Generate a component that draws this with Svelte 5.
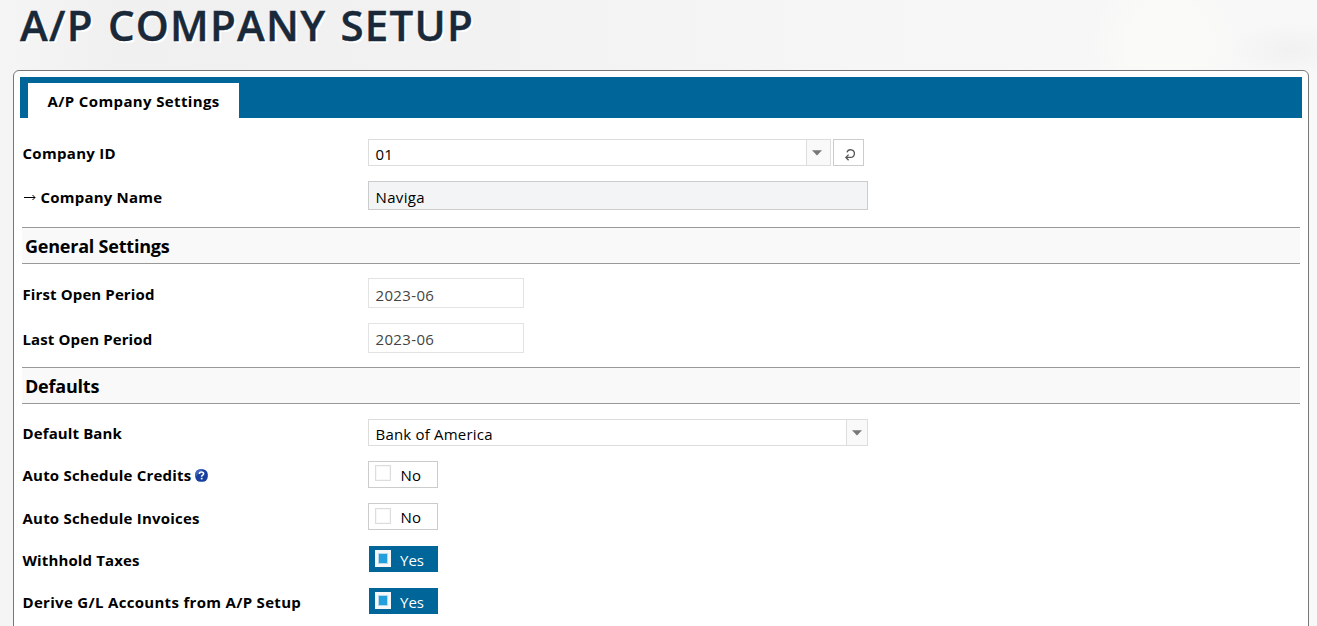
<script>
  const period = '2023-06';
</script>

{#snippet caret()}
  <span class="caret">
    <svg width="10" height="6" viewBox="0 0 10 6"><path d="M0 0.3H10L5 5.6Z" fill="#777" /></svg>
  </span>
{/snippet}

{#snippet toggle(on)}
  <button class="toggle" class:on>
    <span class="box"></span><span class="state">{on ? 'Yes' : 'No'}</span>
  </button>
{/snippet}

<div class="page">
  <h1><span>A/P COMPANY SETUP</span></h1>
  <main class="panel">
    <nav><div class="tab"><span>A/P Company Settings</span></div></nav>
    <div class="form">
      <div class="row first">
        <div class="label"><span>Company ID</span></div>
        <div class="select id"><span class="value">01</span>{@render caret()}</div>
        <button class="refresh" aria-label="Refresh">
          <svg width="12" height="13" viewBox="0 0 12 13" fill="none" stroke="#555" stroke-width="1.3">
            <path d="M3 4.4A3.8 3.8 0 1 1 6.6 9.4H2" /><path d="M4.6 6.6L1.9 9.4L4.6 12.2" />
          </svg>
        </button>
      </div>
      <div class="row name">
        <div class="label">
          <svg class="arrow" width="18" height="9" viewBox="0 0 18 9" fill="none" stroke="#000"><path d="M1 4.5H12M9.5 2L12 4.5L9.5 7" /></svg>
          <span>Company Name</span>
        </div>
        <div class="field readonly"><span class="value">Naviga</span></div>
      </div>
      <h2><span>General Settings</span></h2>
      <div class="row period">
        <div class="label"><span>First Open Period</span></div>
        <div class="field short"><span class="value">{period}</span></div>
      </div>
      <div class="row period last">
        <div class="label"><span>Last Open Period</span></div>
        <div class="field short"><span class="value">{period}</span></div>
      </div>
      <h2><span>Defaults</span></h2>
      <div class="row bank">
        <div class="label"><span>Default Bank</span></div>
        <div class="select wide"><span class="value">Bank of America</span>{@render caret()}</div>
      </div>
      <div class="row">
        <div class="label">
          <span>Auto Schedule Credits</span>
          <svg class="help" width="13" height="13" viewBox="0 0 13 13">
            <rect x="0.2" y="0.2" width="12.6" height="12.6" rx="5.2" fill="#173f9d" />
            <path d="M0.4 8.5V5Q.8 .6 5 .3H8.6Q4 3 .4 8.5Z" fill="#4065b8" />
            <path d="M4.4 5Q4.4 3 6.5 3T8.6 4.8Q8.6 5.8 7.4 6.4Q6.6 6.8 6.6 7.8" fill="none" stroke="#fff" stroke-width="1.6" />
            <rect x="5.8" y="8.8" width="1.7" height="1.6" fill="#fff" />
          </svg>
        </div>
        {@render toggle(false)}
      </div>
      <div class="row invoices">
        <div class="label"><span>Auto Schedule Invoices</span></div>
        {@render toggle(false)}
      </div>
      <div class="row yes">
        <div class="label"><span>Withhold Taxes</span></div>
        {@render toggle(true)}
      </div>
      <div class="row yes derive">
        <div class="label"><span>Derive G/L Accounts from A/P Setup</span></div>
        {@render toggle(true)}
      </div>
    </div>
  </main>
</div>

<style>
  :global(body) { margin: 0; overflow: hidden; }
  .page, .page * { box-sizing: border-box; }
  .page {
    height: 626px;
    overflow: hidden;
    padding: 0 8px 0 13px;
    font: 15px/20px 'Open Sans', 'Noto Sans', sans-serif;
    color: #000;
    background:
      radial-gradient(circle at 1165px 45px, #fafaf8 0, #fafaf8 35px, transparent 75px),
      radial-gradient(ellipse at 1290px 50px, #f1f1f1 0, transparent 60px),
      linear-gradient(90deg, #f5f5f5 0, #f0f0f0 120px, #f2f2f2 500px, #f6f6f6 850px, #f8f8f8 1317px);
  }
  h1 {
    height: 70px;
    margin: 0;
    padding: 0 0 0 7px;
    font-size: 42px;
    line-height: 50px;
    font-weight: 600;
    letter-spacing: 1.25px;
    word-spacing: 2px;
    color: #1a2939;
    text-shadow: 2px 2px 0 #fff;
    -webkit-text-stroke: 0.4px #1a2939;
    white-space: nowrap;
  }
  .panel {
    height: 580px;
    border: 1px solid #777;
    border-radius: 6px;
    background: #fff;
    padding: 6px;
  }
  nav { height: 41px; background: #006599; padding: 6px 0 0 8px; }
  .tab {
    width: 211px;
    height: 35px;
    background: #fff;
    padding-left: 19.5px;
    line-height: 37px;
    font-weight: 700;
    letter-spacing: 0.37px;
    white-space: nowrap;
  }
  .form { padding: 21px 2px 0; }
  .row { display: flex; align-items: flex-start; height: 27px; margin-bottom: 15px; }
  .row.name { height: 29px; margin-bottom: 17px; }
  .row.period { height: 30px; }
  .row.last { margin-bottom: 14px; }
  .row.invoices { margin-bottom: 16px; }
  .row.yes { height: 26px; margin-bottom: 16px; }
  .label {
    display: flex;
    align-items: center;
    width: 346px;
    height: 27px;
    padding-left: 0.5px;
    font-weight: 700;
    letter-spacing: 0.21px;
    white-space: nowrap;
  }
  .name .label, .period .label { height: 31px; }
  .period .label, .bank .label, .yes .label { letter-spacing: 0.12px; }
  .invoices .label { height: 29px; }
  .derive .label { letter-spacing: 0.31px; }
  .first .label { letter-spacing: 0.3px; }
  .arrow { margin-top: 2px; }
  .help { margin: 1px 0 0 4px; }
  h2 {
    height: 37px;
    margin: 0 0 14px;
    padding-left: 3px;
    border: solid #999;
    border-width: 1px 0;
    background: #f9f9f9;
    font-size: 18px;
    line-height: 36px;
    font-weight: 700;
    letter-spacing: -0.22px;
  }
  h2:has(+ .bank) { margin-bottom: 15px; }
  .field, .select { display: flex; height: 100%; border: 1px solid #ddd; padding-left: 6.5px; background: #fff; align-items: center; }
  .readonly { width: 500px; background: #f3f4f6; border-color: #ccc; }
  .short { width: 156px; color: #444; border-color: #e3e3e3; }
  .value { flex: 1; padding-top: 3px; letter-spacing: 0.2px; white-space: nowrap; }
  .short .value { letter-spacing: 0.35px; }
  .readonly .value { letter-spacing: 0.35px; }
  .last .value { padding-top: 1px; }
  .id { width: 463px; }
  .wide { width: 500px; }
  .caret {
    display: flex;
    align-items: center;
    justify-content: center;
    width: 24px;
    height: 100%;
    padding-right: 3px;
    border-left: 1px solid #ddd;
    background: #f9f9f9;
  }
  .wide .caret { width: 21px; padding-right: 0; }
  button { font: inherit; color: inherit; margin: 0; padding: 0; background: #fff; border: 1px solid #ccc; display: flex; }
  .refresh { width: 31px; height: 27px; margin-left: 2px; align-items: center; justify-content: center; padding: 3px 0 0 2px; }
  .toggle { width: 70px; height: 27px; padding: 3px 0 0 6px; }
  .box { width: 16px; height: 16px; border: 1px solid #ddd; box-shadow: inset 0 0 0 1px #f7f7f7; }
  .invoices .box { margin-top: 1px; }
  .state { margin-left: 9.5px; letter-spacing: 0.3px; }
  .on { width: 69px; height: 26px; margin-left: 1px; border: 0; background: #006599; color: #fff; padding: 4px 0 0 6px; }
  .on .state { margin-left: 9px; letter-spacing: 0; }
  .on .box { height: 17px; background: #239fdd; border: 3px solid #f5f7f9; box-shadow: inset 0 0 0 1px #b5daf0; }
</style>
